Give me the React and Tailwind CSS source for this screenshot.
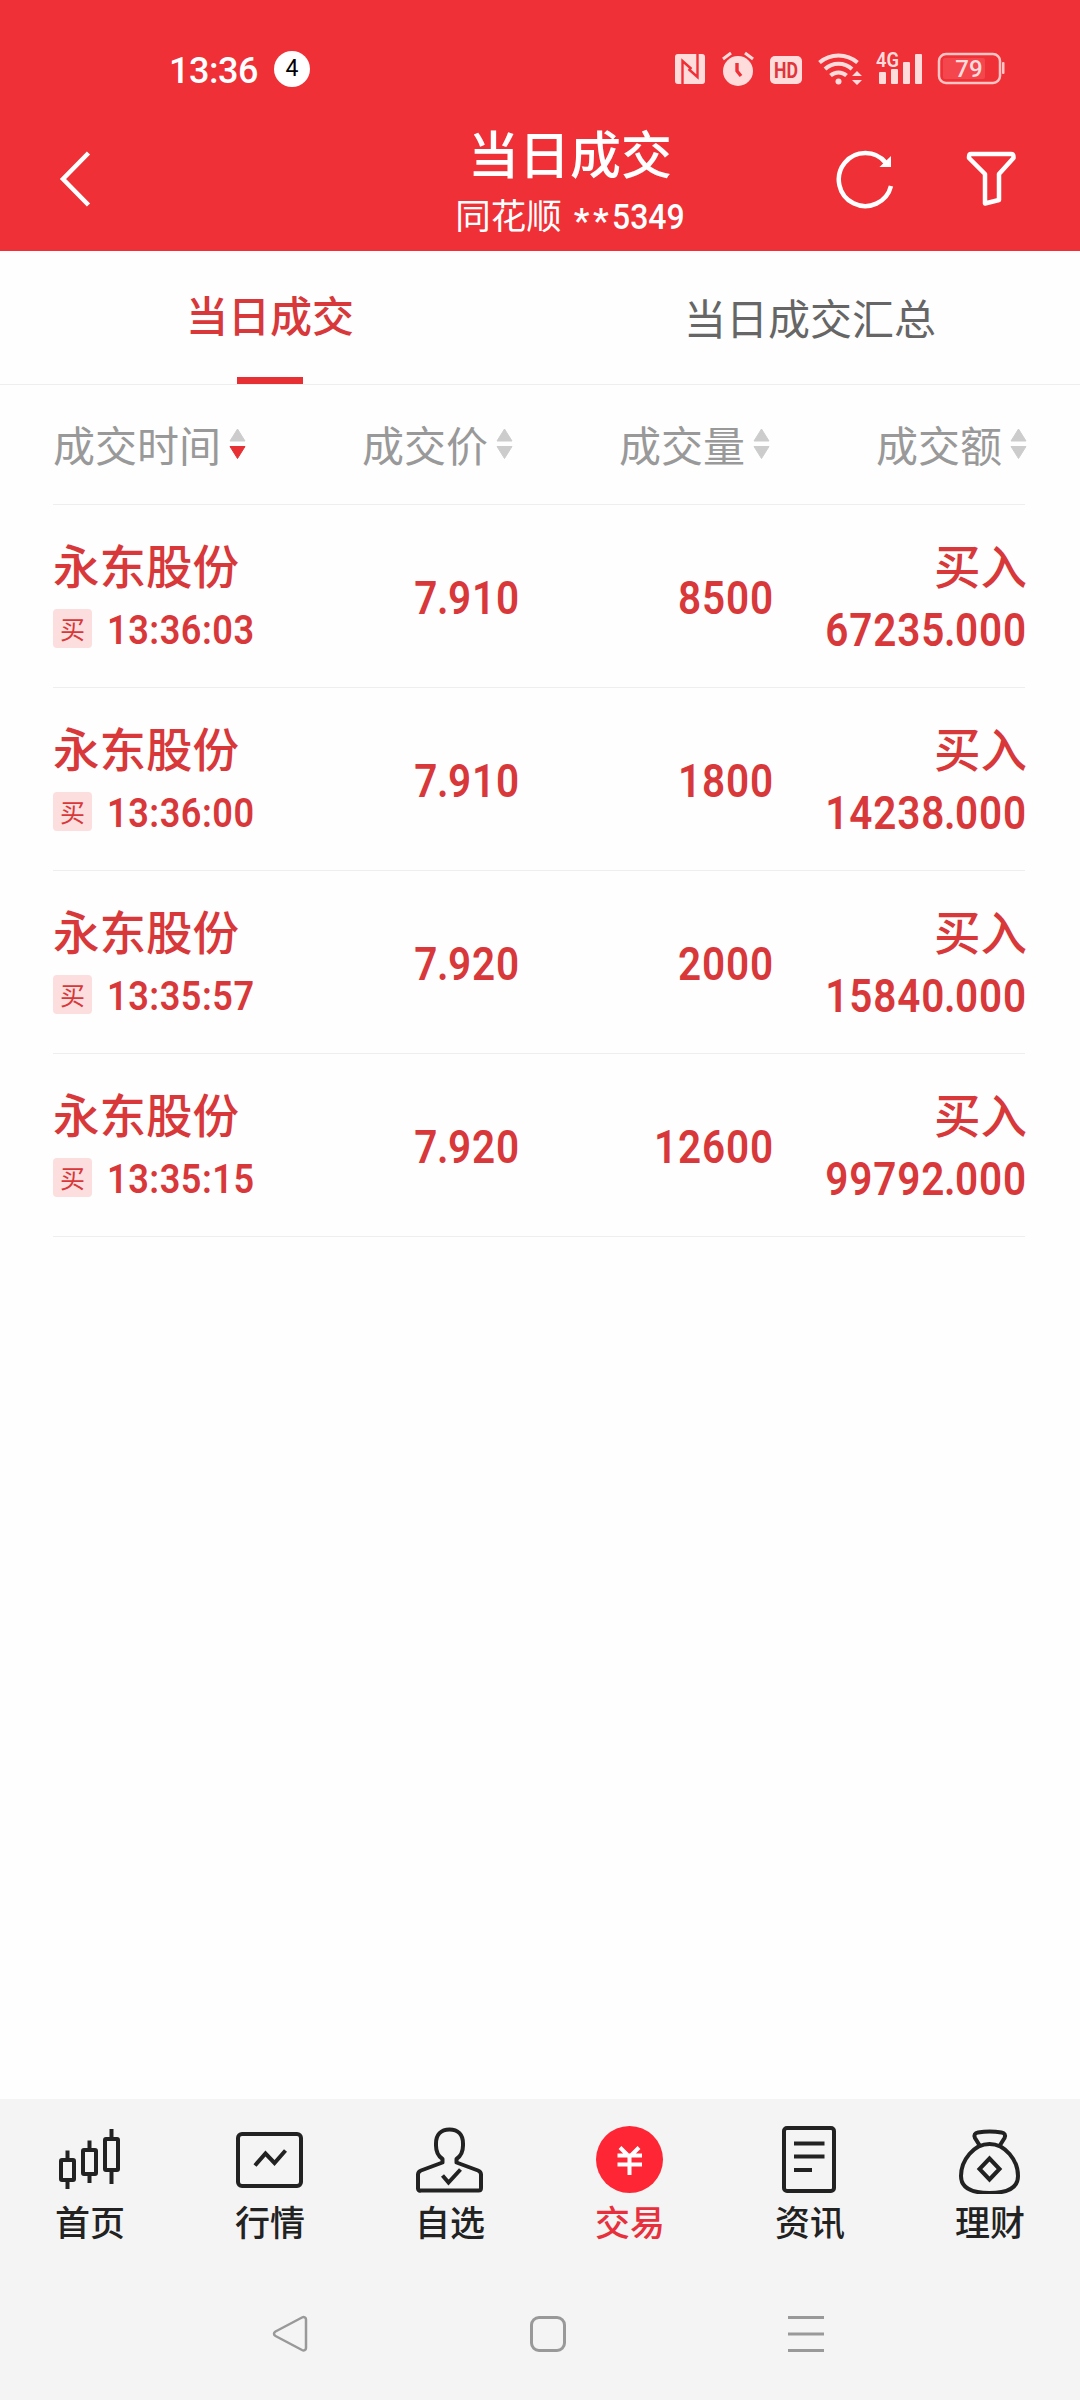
import React from "react";

const orders = [
  { id: 1, name: "永东股份", time: "13:36:03", price: "7.910", volume: "8500", amount: "67235.000" },
  { id: 2, name: "永东股份", time: "13:36:00", price: "7.910", volume: "1800", amount: "14238.000" },
  { id: 3, name: "永东股份", time: "13:35:57", price: "7.920", volume: "2000", amount: "15840.000" },
  { id: 4, name: "永东股份", time: "13:35:15", price: "7.920", volume: "12600", amount: "99792.000" },
];

const StatusIcons = () => (
  <svg width="332" height="46" viewBox="675 46 332 46" fill="#ffdcdc">
    {/* nfc */}
    <rect x="675" y="54" width="30" height="30" rx="3" />
    <path d="M682.500 84V61l9 8M697.500 54v23l-9-8" fill="none" stroke="#ef3037" strokeWidth="2.400" />
    {/* alarm */}
    <circle cx="738" cy="71" r="15" />
    <path d="M723 59l8-6M753 59l-8-6" stroke="#ffdcdc" strokeWidth="3" />
    <path d="M737 63v8l4 5" fill="none" stroke="#ef3037" strokeWidth="3.400" />
    {/* hd */}
    <rect x="770" y="56" width="32" height="28" rx="5" />
    <text x="786" y="78" textAnchor="middle" textLength="24" lengthAdjust="spacingAndGlyphs" fontFamily="Roboto, sans-serif" fontSize="22" fontWeight="700" fill="#e0353b">HD</text>
    {/* wifi */}
    <g fill="none" stroke="#ffdcdc" strokeWidth="4">
      <path d="M819.500 62.500a29 29 0 0 1 38 0" />
      <path d="M825 69a20 20 0 0 1 27 0" />
      <path d="M830.500 75.500a12 12 0 0 1 16 0" />
    </g>
    <circle cx="838.500" cy="81.500" r="3" />
    <path d="M852 76l5-5 5 5zM852 80l5 5 5-5z" />
    {/* signal */}
    <text x="876" y="67" textLength="23" lengthAdjust="spacingAndGlyphs" fontFamily="Roboto, sans-serif" fontSize="21" fontWeight="600">4G</text>
    <rect x="879" y="72" width="7" height="12" rx="1" />
    <rect x="891" y="69" width="7" height="15" rx="1" />
    <rect x="903" y="62" width="7" height="22" rx="1" />
    <rect x="915" y="54" width="7" height="30" rx="1" />
    {/* battery */}
    <rect x="939" y="54" width="61" height="29" rx="7" fill="none" stroke="#ffc4c4" strokeWidth="2.500" />
    <rect x="943" y="58" width="42" height="21" rx="2" fill="#f4474d" />
    <rect x="1002" y="62" width="2.500" height="12" rx="1" fill="#ffc4c4" />
    <text x="969" y="77" textAnchor="middle" fontFamily="Roboto, sans-serif" fontSize="24" fontWeight="500">79</text>
  </svg>
);

const SortIcon = ({ active }) => (
  <svg width="17" height="30" viewBox="0 0 17 30">
    <path d="M8.500 0L16 12H1z" fill="#ccc" stroke="#ccc" strokeWidth="1" strokeLinejoin="round" />
    <path d="M8.500 29.500L1 17.500h15z" fill={active ? "#e63034" : "#ccc"} stroke={active ? "#e63034" : "#ccc"} strokeWidth="1" strokeLinejoin="round" />
  </svg>
);

const HomeIcon = () => (
  <svg width="68" height="68" viewBox="0 0 68 68" fill="none" stroke="#222" strokeWidth="4">
    <rect x="5" y="34" width="13" height="20" rx="1" />
    <rect x="27" y="24" width="13" height="24" rx="1" />
    <rect x="49" y="13" width="13" height="31" rx="1" />
    <path d="M11.500 24.500V34M11.500 54v9M33.500 14.500V24M33.500 48v9M55.500 3v10M55.500 44v14" />
  </svg>
);

const MarketIcon = () => (
  <svg width="68" height="68" viewBox="0 0 68 68" fill="none" stroke="#222" strokeWidth="4">
    <rect x="2" y="8" width="63" height="52" rx="4" />
    <path d="M19 39.500l10.500-12 9 9.500L49.500 24.500" />
  </svg>
);

const WatchIcon = () => (
  <svg width="68" height="68" viewBox="0 0 68 68" fill="none" stroke="#222" strokeWidth="4" strokeLinejoin="round">
    <path d="M26.500 36.500V33C22 30 20 25.500 20 19.500v-2C20 8.500 25 3.500 33.500 3.500S47 8.500 47 17.500v2c0 6-2 10.500-6.500 13.500v3.500l21.500 8c2 .8 3 2 3 4v13.500c0 1.500-1 2.500-2.500 2.500h-58C3 65 2 64 2 62.500V48.500c0-2 1-3.200 3-4z" />
    <path d="M26.500 49.500l6 7 12-13" strokeLinejoin="miter" />
  </svg>
);

const TradeIcon = () => (
  <svg width="68" height="68" viewBox="0 0 68 68" fill="none">
    <circle cx="33.500" cy="33.500" r="33.500" fill="#fe2635" />
    <path d="M24 21.500L33.500 31 43 21.500M21.500 29.500h24.500M21.500 38.500h24.500M33.500 30v19" stroke="#fff" strokeWidth="4" />
  </svg>
);

const NewsIcon = () => (
  <svg width="68" height="68" viewBox="0 0 68 68" fill="none" stroke="#222" strokeWidth="4">
    <rect x="8" y="2" width="50" height="63" rx="3" />
    <path d="M18 17.500h30.500M18 30.500h30.500M18 44h18" />
  </svg>
);

const WealthIcon = () => (
  <svg width="68" height="68" viewBox="0 0 68 68" fill="none" stroke="#222" strokeWidth="4">
    <path d="M33.500 18C18 18 5 34 5 50c0 12 10 17 28.500 17S62 62 62 50C62 34 49 18 33.500 18z" />
    <path d="M24 20l-5-8c-1.500-3 0-5 3-5.500 8-1.500 15.500-1.500 23.500 0 3 .5 4.500 2.500 3 5.500l-5 8" />
    <path d="M33.500 32.500L43.500 43l-10 10.500L23.500 43z" />
  </svg>
);

const navItems = [
  { label: "首页", Icon: HomeIcon },
  { label: "行情", Icon: MarketIcon },
  { label: "自选", Icon: WatchIcon },
  { label: "交易", Icon: TradeIcon, active: true },
  { label: "资讯", Icon: NewsIcon },
  { label: "理财", Icon: WealthIcon },
];

const Header = () => (
  <header className="h-[251px] bg-[#ef3037] text-white">
    <div className="flex h-[124px] items-center justify-between pl-[169px] pr-[73px] pt-[14px]">
      <div className="flex items-center gap-4">
        <span className="pt-[3px] font-['Roboto'] text-[36px] font-medium leading-10 tracking-[-0.500px]">13:36</span>
        <span className="flex size-9 items-center justify-center rounded-full bg-white font-['Roboto'] text-[23px] text-black">
          4
        </span>
      </div>
      <StatusIcons />
    </div>
    <div className="grid grid-cols-[400px_340px_340px]">
      <svg className="ml-[58px] mt-[27px]" width="34" height="56" viewBox="0 0 34 56" fill="none" stroke="#fff" strokeWidth="4.500">
        <path d="M30.500 2L5 28l25.500 26" />
      </svg>
      <div className="flex flex-col items-center">
        <h1 className="text-[51px] font-medium leading-[56px]">当日成交</h1>
        <div className="mt-[7px] flex items-center text-[35.500px] leading-10">
          <span>同花顺</span>
          <span className="ml-3 pt-3.5 font-['Roboto'] font-medium tracking-[3.500px]">**</span>
          <span className="-mr-2 origin-left scale-x-[0.9] pt-[5px] font-['Roboto'] font-medium">5349</span>
        </div>
      </div>
      <div className="flex items-start justify-between pl-[95px] pr-[63px] pt-[24px]">
        <svg width="60" height="62" viewBox="0 0 60 62" fill="none" stroke="#fff" strokeWidth="4.500">
          <path d="M56 38A26.500 26.500 0 1 1 51 15" />
          <path d="M56 8v11H44.500z" fill="#fff" stroke="none" />
        </svg>
        <svg width="52" height="60" viewBox="0 0 52 60" fill="none" stroke="#fff" strokeWidth="4.500" strokeLinejoin="round">
          <path d="M6 6h40c2 0 2.500 1 2.500 3v1L34 26v26l-14 3.500V26L4 10V9c0-2 0-3 2-3z" />
        </svg>
      </div>
    </div>
  </header>
);

const OrderRow = ({ order }) => (
  <li className="grid h-[183px] grid-cols-[244px_223px_254px_253px] border-b border-[#eee] text-[#d8383a]">
    <div className="pt-[31px]">
      <p className="text-[46.500px] font-medium leading-[56px]">{order.name}</p>
      <div className="mt-[15px] flex items-center">
        <span className="flex h-[39px] w-[39px] items-center justify-center rounded bg-[#fcdede] pb-0.5 text-[25px] leading-9">
          买
        </span>
        <span className="ml-[15px] origin-left scale-x-[0.88] pt-[3px] font-['Roboto'] text-[41px] font-semibold leading-10 tracking-[0.600px]">
          {order.time}
        </span>
      </div>
    </div>
    <Amount className="pt-[68px]" value={order.price} />
    <Amount className="pt-[68px]" value={order.volume} />
    <div className="pt-[31px] text-right">
      <p className="text-[46.500px] font-medium leading-[56px]">买入</p>
      <Amount className="mt-[13px]" value={order.amount} />
    </div>
  </li>
);

const Amount = ({ value, className }) => {
  const [whole, decimals] = value.split(".");

  return (
    <div className={className}>
      <p className="origin-right scale-x-[0.88] text-right font-['Roboto'] text-[46px] font-semibold leading-[50px] tracking-[1px]">
        {whole}
        {decimals && <span className="-mx-[1.500px]">.</span>}
        {decimals}
      </p>
    </div>
  );
};

export default function App() {
  return (
    <div className="flex h-[2400px] w-[1080px] flex-col overflow-hidden bg-[#fefefe] font-['Noto_Sans_CJK_SC',sans-serif]">
      <Header />

      <nav className="grid h-[134px] grid-cols-2 border-b border-[#eee]">
        <div className="flex flex-col items-center justify-between pt-[38px]">
          <span className="text-[42px] font-medium leading-[50px] text-[#d8383a]">当日成交</span>
          <span className="h-[7px] w-[66px] bg-[#e63034]" />
        </div>
        <div className="pt-[41px] text-center text-[42px] leading-[50px] text-[#666]">当日成交汇总</div>
      </nav>

      <main className="flex-1 pl-[53px] pr-[55px]">
        <div className="flex h-[120px] items-center border-b border-[#eee] pb-px text-[42px] leading-[50px] text-[#999]">
          <div className="flex w-[309px] shrink-0 items-center gap-2">
            成交时间 <SortIcon active />
          </div>
          <div className="flex w-[257px] shrink-0 items-center gap-2">
            成交价 <SortIcon />
          </div>
          <div className="flex w-[257px] shrink-0 items-center gap-2">
            成交量 <SortIcon />
          </div>
          <div className="flex shrink-0 items-center gap-2">
            成交额 <SortIcon />
          </div>
        </div>
        <ul>
          {orders.map((order) => (
            <OrderRow key={order.id} order={order} />
          ))}
        </ul>
      </main>

      <footer className="h-[301px] bg-[#f4f4f4]">
        <div className="grid grid-cols-6 pt-[27px]">
          {navItems.map(({ label, Icon, active }) => (
            <div key={label} className="flex flex-col items-center">
              <Icon />
              <span
                className={
                  active
                    ? "mt-[7px] text-[35px] font-medium leading-[40px] text-[#e8303c]"
                    : "mt-[7px] text-[35px] font-medium leading-[40px] text-[#222]"
                }
              >
                {label}
              </span>
            </div>
          ))}
        </div>
        <div className="mt-[73px] flex items-center pl-[271px]">
          <svg width="38" height="40" viewBox="0 0 38 40" fill="none" stroke="#999" strokeWidth="2.500" strokeLinejoin="round">
            <path d="M31 3.500L4.500 17.500c-2 1.200-2 3.500 0 4.500L31 36c2 1 4 0 4-2V5.500c0-2-2-3-4-2z" />
          </svg>
          <div className="ml-[221px] size-9 rounded-[9px] border-3 border-[#999]" />
          <svg className="ml-[222px]" width="36" height="36" viewBox="0 0 36 36" stroke="#999" strokeWidth="3">
            <path d="M0 1.500h36M0 18h36M0 34.500h36" />
          </svg>
        </div>
      </footer>
    </div>
  );
}
